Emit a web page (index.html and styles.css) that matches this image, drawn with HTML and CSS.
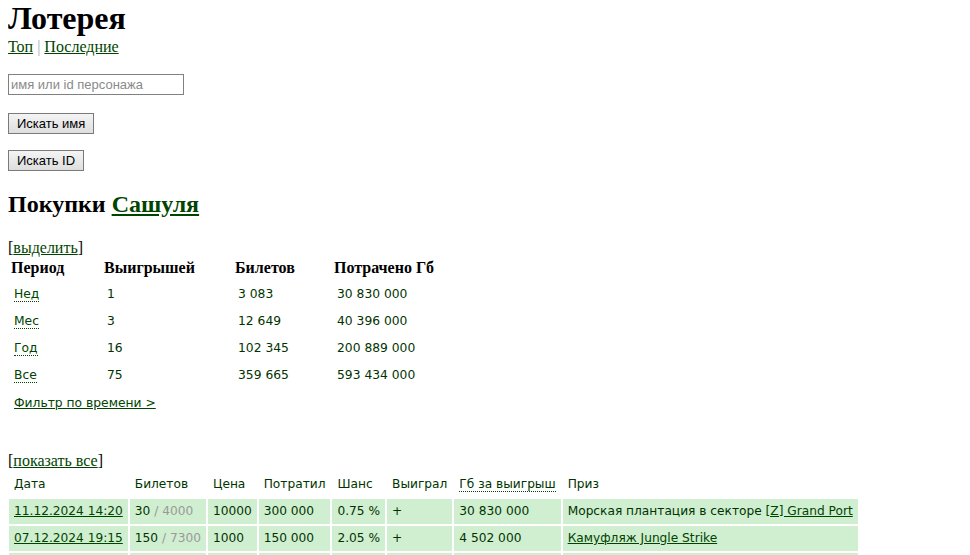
FILE: index.html
```html
<!DOCTYPE html>
<html>
<head>
    <meta charset="utf-8">
    <title>Лотерея</title>
    <link rel="stylesheet" href="styles.css">
</head>
<body>
    <h1>Лотерея</h1>
    <div class="menu">
        <a href="#">Топ</a> <span class="sep">|</span> <a href="#">Последние</a>
    </div>

    <!-- поиск персонажа -->
    <form class="search">
        <p class="field"><input type="text" placeholder="имя или id персонажа"></p>
        <p><button type="button">Искать имя</button></p>
        <p><button type="button">Искать ID</button></p>
    </form>

    <h2>Покупки <a href="#">Сашуля</a></h2>

    <div class="toggle">[<a href="#">выделить</a>]</div>

    <!-- итоги по периодам -->
    <table class="stats">
        <tr>
            <th class="col-period">Период</th>
            <th class="col-wins">Выигрышей</th>
            <th class="col-tickets">Билетов</th>
            <th>Потрачено Гб</th>
        </tr>
        <tr>
            <td><a class="hint" href="#">Нед</a></td>
            <td>1</td>
            <td>3 083</td>
            <td>30 830 000</td>
        </tr>
        <tr>
            <td><a class="hint" href="#">Мес</a></td>
            <td>3</td>
            <td>12 649</td>
            <td>40 396 000</td>
        </tr>
        <tr>
            <td><a class="hint" href="#">Год</a></td>
            <td>16</td>
            <td>102 345</td>
            <td>200 889 000</td>
        </tr>
        <tr>
            <td><a class="hint" href="#">Все</a></td>
            <td>75</td>
            <td>359 665</td>
            <td>593 434 000</td>
        </tr>
        <tr>
            <td class="filter" colspan="4"><a href="#">Фильтр по времени &gt;</a></td>
        </tr>
    </table>

    <div class="toggle show-all">[<a href="#">показать все</a>]</div>

    <!-- список покупок -->
    <table class="buys">
        <tr class="head">
            <td>Дата</td>
            <td>Билетов</td>
            <td>Цена</td>
            <td>Потратил</td>
            <td>Шанс</td>
            <td>Выиграл</td>
            <td><span class="hint">Гб за выигрыш</span></td>
            <td>Приз</td>
        </tr>
        <tr>
            <td><a href="#">11.12.2024 14:20</a></td>
            <td>30 <span class="muted">/ 4000</span></td>
            <td>10000</td>
            <td>300 000</td>
            <td>0.75 %</td>
            <td>+</td>
            <td>30 830 000</td>
            <td>Морская плантация в секторе <a href="#">[Z] Grand Port</a></td>
        </tr>
        <tr>
            <td><a href="#">07.12.2024 19:15</a></td>
            <td>150 <span class="muted">/ 7300</span></td>
            <td>1000</td>
            <td>150 000</td>
            <td>2.05 %</td>
            <td>+</td>
            <td>4 502 000</td>
            <td><a href="#">Камуфляж Jungle Strike</a></td>
        </tr>
        <tr>
            <td>&nbsp;</td>
            <td>&nbsp;</td>
            <td>&nbsp;</td>
            <td>&nbsp;</td>
            <td>&nbsp;</td>
            <td>&nbsp;</td>
            <td>&nbsp;</td>
            <td>&nbsp;</td>
        </tr>
    </table>
</body>
</html>
```

FILE: styles.css
```css
/* общие стили */
body {
    font-family: "Liberation Serif", "Times New Roman", serif;
    font-size: 16px;
    color: #000;
    background-color: #fff;
    margin: 0 8px;
}

a {
    color: #004400;
}

h1 {
    font-size: 32px;
    margin: 0 0 1px;
}

h2 {
    font-size: 24px;
    margin: 20px 0 21px;
}

.menu .sep {
    color: #9ab0c8;
}

/* форма поиска */
.search p {
    margin: 16px 0;
}

.search .field {
    margin: 18px 0;
}

.search input {
    width: 176px;
    height: 21px;
    box-sizing: border-box;
    border: 1px solid #808080;
    padding: 1px 2px;
    font-family: "Liberation Sans", Arial, sans-serif;
    font-size: 13px;
}

    .search input::placeholder {
        color: #8a8a8a;
    }

.search button {
    height: 21px;
    padding: 0 8px;
    border: 1px solid #7a7a7a;
    background: linear-gradient(#f4f4f4, #dedede);
    font-family: "Liberation Sans", Arial, sans-serif;
    font-size: 13px;
    color: #000;
}

/* итоги */
.stats {
    border-spacing: 0;
}

    .stats th {
        text-align: left;
        padding: 2px 3px 4px;
    }

    .stats td {
        font-family: "DejaVu Sans", Verdana, sans-serif;
        font-size: 12.3px;
        line-height: 15px;
        color: #003300;
        padding: 6px;
    }

    .stats .col-period {
        width: 87px;
    }

    .stats .col-wins {
        width: 125px;
    }

    .stats .col-tickets {
        width: 93px;
    }

    .stats td.filter {
        padding: 7px 6px 9px;
    }

.hint {
    text-decoration: none;
    border-bottom: 1px dotted #004400;
}

.show-all {
    margin-top: 32px;
}

/* покупки */
.buys {
    border-spacing: 2px;
    margin-left: -1px;
    font-family: "DejaVu Sans", Verdana, sans-serif;
    font-size: 12.2px;
    line-height: 15px;
    color: #003300;
}

    .buys td {
        padding: 5px;
        white-space: nowrap;
        background-color: #d0eed0;
    }

    .buys .head td {
        background-color: transparent;
    }

.muted {
    color: #999;
}
```
